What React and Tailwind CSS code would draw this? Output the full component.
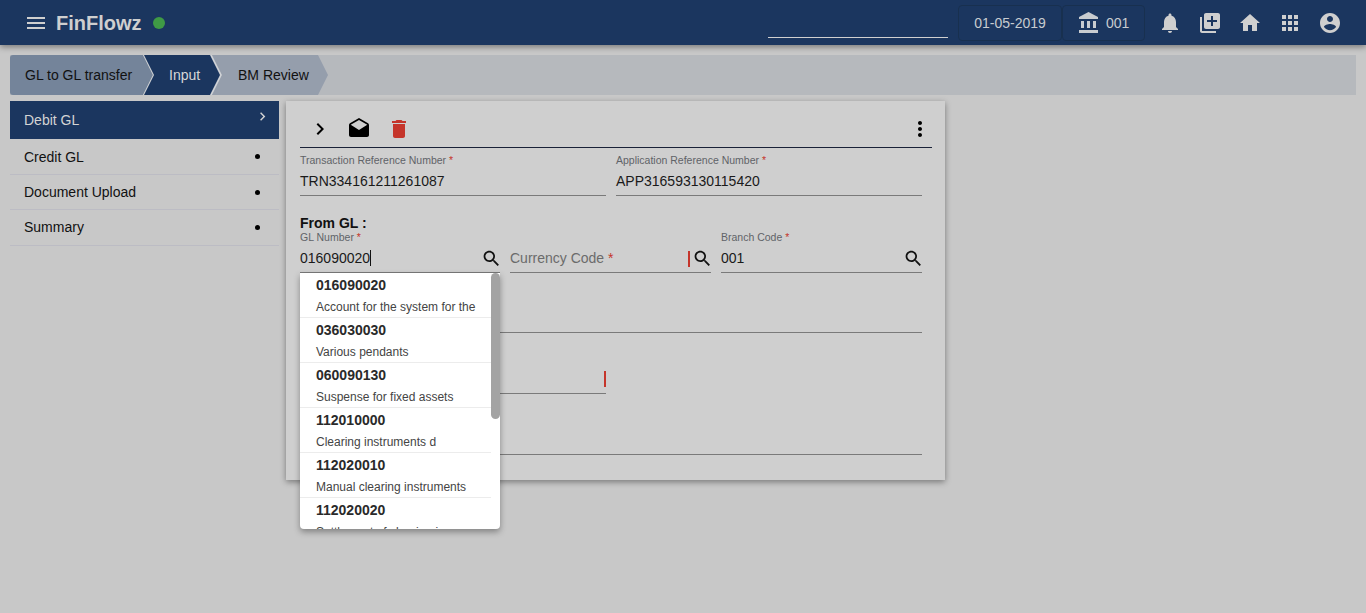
const P = {
  menu: "M3 18h18v-2H3v2zm0-5h18v-2H3v2zm0-7v2h18V6H3z",
  bell: "M12 22c1.1 0 2-.9 2-2h-4c0 1.1.89 2 2 2zm6-6v-5c0-3.07-1.64-5.64-4.5-6.32V4c0-.83-.67-1.5-1.5-1.5s-1.5.67-1.5 1.5v.68C7.63 5.36 6 7.92 6 11v5l-2 2v1h16v-1l-2-2z",
  lib: "M4 6H2v14c0 1.1.9 2 2 2h14v-2H4V6zm16-4H8c-1.1 0-2 .9-2 2v12c0 1.1.9 2 2 2h12c1.1 0 2-.9 2-2V4c0-1.1-.9-2-2-2zm-1 9h-4v4h-2v-4H9V9h4V5h2v4h4v2z",
  home: "M10 20v-6h4v6h5v-8h3L12 3 2 12h3v8z",
  apps: "M4 8h4V4H4v4zm6 12h4v-4h-4v4zm-6 0h4v-4H4v4zm0-6h4v-4H4v4zm6 0h4v-4h-4v4zm6-10v4h4V4h-4zm-6 4h4V4h-4v4zm6 6h4v-4h-4v4zm0 6h4v-4h-4v4z",
  acct: "M12 2C6.48 2 2 6.48 2 12s4.48 10 10 10 10-4.48 10-10S17.52 2 12 2zm0 3c1.66 0 3 1.34 3 3s-1.34 3-3 3-3-1.34-3-3 1.34-3 3-3zm0 14.2c-2.5 0-4.71-1.28-6-3.22.03-1.99 4-3.08 6-3.08 1.99 0 5.97 1.09 6 3.08-1.29 1.94-3.5 3.22-6 3.22z",
  bank: "M4 10v7h3v-7H4zm6 0v7h3v-7h-3zM2 22h19v-3H2v3zm14-12v7h3v-7h-3zm-4.5-9L2 6v2h19V6l-9.5-5z",
  search: "M15.5 14h-.79l-.28-.27C15.41 12.59 16 11.11 16 9.5 16 5.91 13.09 3 9.5 3S3 5.91 3 9.5 5.91 16 9.5 16c1.61 0 3.09-.59 4.23-1.57l.27.28v.79l5 4.99L20.49 19l-4.99-5zm-6 0C7.01 14 5 11.99 5 9.5S7.01 5 9.5 5 14 7.01 14 9.5 11.99 14 9.5 14z",
  drafts: "M21.99 8c0-.72-.37-1.35-.94-1.7L12 1 2.95 6.3C2.38 6.65 2 7.28 2 8v10c0 1.1.9 2 2 2h16c1.1 0 2-.9 2-2l-.01-10zM12 13L3.74 7.84 12 3l8.26 4.84L12 13z",
  del: "M6 19c0 1.1.9 2 2 2h8c1.1 0 2-.9 2-2V7H6v12zM19 4h-3.5l-1-1h-5l-1 1H5v2h14V4z",
  more: "M12 8c1.1 0 2-.9 2-2s-.9-2-2-2-2 .9-2 2 .9 2 2 2zm0 2c-1.1 0-2 .9-2 2s.9 2 2 2 2-.9 2-2-.9-2-2-2zm0 6c-1.1 0-2 .9-2 2s.9 2 2 2 2-.9 2-2-.9-2-2-2z",
  chev: "M10 6L8.59 7.41 13.17 12l-4.58 4.59L10 18l6-6z",
};

function Icon({ d, size = 24, className = "" }) {
  return (
    <svg viewBox="0 0 24 24" width={size} height={size} fill="currentColor" className={"shrink-0 " + className}>
      <path d={d} />
    </svg>
  );
}

const Label = ({ children }) => (
  <div className="h-[14px] text-[10.5px] leading-[14px] text-[#5f6368] whitespace-nowrap">
    {children} <span className="text-[#c5352b]">*</span>
  </div>
);

const Field = ({ label, value, className = "", children }) => (
  <div className={"relative " + className}>
    <Label>{label}</Label>
    <div className="h-[29px] border-b border-[#7a7a7a] flex items-center text-[14px] text-[#1a1a1a] pt-[1px]">
      <span className="flex-1">{value}</span>
      {children}
    </div>
  </div>
);

const Search = ({ className = "" }) => <Icon d={P.search} size={21} className={"text-[#111] " + className} />;

const options = [
  ["016090020", "Account for the system for the"],
  ["036030030", "Various pendants"],
  ["060090130", "Suspense for fixed assets"],
  ["112010000", "Clearing instruments d"],
  ["112020010", "Manual clearing instruments"],
  ["112020020", "Settlement of clearing ins"],
];

export default function App() {
  return (
    <div className="relative h-[613px] w-[1366px] overflow-hidden bg-[#c8c8c8] font-['Liberation_Sans',Arial,sans-serif]">
      <header className="relative z-10 h-[45px] bg-[#1b365f] flex items-center shadow-[0_2px_6px_rgba(0,0,0,0.4)] text-[#cfcfcf]">
        <Icon d={P.menu} size={24} className="ml-[24px]" />
        <span className="ml-[8px] text-[20px] font-bold">FinFlowz</span>
        <span className="ml-[11px] mt-[1px] h-3 w-3 rounded-full bg-[#3f9a45]" />
        <div className="ml-auto self-start mt-[37px] w-[180px] border-b border-[#d0d0d0]" />
        <div className="ml-[10px] self-start mt-[5px] h-[36px] w-[104px] rounded-[4px] border border-[#18304f] flex items-center justify-center text-[14px] text-[#c8ccd0]">01-05-2019</div>
        <div className="self-start mt-[5px] h-[36px] w-[83px] rounded-[4px] border border-[#18304f] flex items-center gap-[5px] pl-[14px] text-[14px] text-[#c8ccd0]">
          <Icon d={P.bank} size={24} />
          <span>001</span>
        </div>
        <div className="ml-[13px] mr-[24px] flex items-center gap-[16px]">
          <Icon d={P.bell} />
          <Icon d={P.lib} />
          <Icon d={P.home} />
          <Icon d={P.apps} />
          <Icon d={P.acct} />
        </div>
      </header>

      <div className="mx-[10px] mt-[10px] h-[40px] bg-[#b6b9bd] flex">
        <div className="relative w-[143px] h-full shrink-0 rounded-l-[3px] bg-[#74849a] [clip-path:polygon(0_0,133px_0,143px_50%,133px_100%,0_100%)] flex items-center pl-[15px] text-[14px] text-[#111]">GL to GL transfer</div>
        <div className="relative ml-[-10px] w-[79px] h-full shrink-0 bg-[#cfd2d6] [clip-path:polygon(0_0,69px_0,79px_50%,69px_100%,0_100%,10px_50%)]" />
        <div className="relative ml-[-78px] w-[76px] h-full shrink-0 bg-[#1b365f] [clip-path:polygon(0_0,66px_0,76px_50%,66px_100%,0_100%,10px_50%)] flex items-center pl-[25px] text-[14px] text-[#d8d8d8]">Input</div>
        <div className="relative ml-[-8px] w-[116px] h-full shrink-0 bg-[#959eac] [clip-path:polygon(0_0,106px_0,116px_50%,106px_100%,0_100%,10px_50%)] flex items-center pl-[26px] text-[14px] text-[#111]">BM Review</div>
      </div>

      <div className="mx-[10px] mt-[6px] flex gap-[7px] items-start">
        <nav className="w-[269px] shrink-0 text-[14px] text-[#111]">
          <div className="h-[38px] bg-[#1b365f] text-[#d4d4d4] flex items-center justify-between pl-[14px] pr-[8px]">
            <span>Debit GL</span>
            <Icon d={P.chev} size={17} className="mt-[-7px]" />
          </div>
          {[["Credit GL", 36, "mt-[1px]"], ["Document Upload", 35, ""], ["Summary", 36, "mt-[-1px]"]].map(([t, h, c]) => (
            <div key={t} style={{ height: h }} className="border-b border-[#bcbcc4] flex items-center justify-between pl-[14px] pr-[19px]">
              <span className={c}>{t}</span>
              <span className="h-[5px] w-[5px] rounded-full bg-black" />
            </div>
          ))}
        </nav>

        <main className="relative w-[659px] h-[379px] shrink-0 bg-[#cfcfcf] shadow-[0_2px_6px_rgba(0,0,0,0.4)] pl-[14px] pr-[13px]">
          <div className="h-[47px] border-b border-[#1a2238] flex items-center text-black pt-[10px]">
            <Icon d={P.chev} size={24} className="ml-[8px]" />
            <Icon d={P.drafts} size={24} className="ml-[15px]" />
            <Icon d={P.del} size={24} className="ml-[16px] text-[#c5352b]" />
            <Icon d={P.more} size={24} className="ml-auto" />
          </div>

          <div className="pr-[10px]">
            <div className="mt-[5px] flex gap-[10px]">
              <Field label="Transaction Reference Number" value="TRN334161211261087" className="flex-1" />
              <Field label="Application Reference Number" value="APP316593130115420" className="flex-1" />
            </div>

            <div className="mt-[19px] h-[16px] text-[14px] leading-[16px] font-bold text-[#111]">From GL :</div>

            <div className="flex gap-[10px] mt-[-1px] relative">
              <Field label="GL Number" value={<>016090020<span className="inline-block w-px h-[16px] bg-[#111] align-[-3px]" /></>} className="w-[200px]">
                <Search className="mr-[-2px]" />
              </Field>
              <div className="w-[201px]">
                <div className="h-[14px]" />
                <div className="h-[29px] border-b border-[#7a7a7a] flex items-center text-[14px] pt-[1px] text-[#6b6b6b]">
                  <span className="flex-1">Currency Code <span className="text-[#c5352b]">*</span></span>
                  <span className="h-[16px] w-[2px] bg-[#c5352b] mr-[2px]" />
                  <Search className="mr-[-2px]" />
                </div>
              </div>
              <Field label="Branch Code" value="001" className="w-[201px]">
                <Search className="mr-[-2px]" />
              </Field>

              <div className="absolute left-0 top-[43px] z-20 w-[200px] h-[256px] overflow-hidden rounded-b-[4px] bg-white shadow-[0_3px_6px_rgba(0,0,0,0.35)]">
                {options.map(([n, d]) => (
                  <div key={n} className="h-[45px] w-[191px] border-b border-[#ececec] pl-[16px] pt-[3px]">
                    <div className="h-[18px] text-[14px] leading-[18px] font-bold text-[#2a2a2a]">{n}</div>
                    <div className="mt-[5px] text-[12px] leading-[16px] text-[#444] whitespace-nowrap">{d}</div>
                  </div>
                ))}
                <div className="absolute right-0 top-0 w-[9px] h-[146px] rounded-[5px] bg-[#a3a3a3]" />
              </div>
            </div>

            <div className="mt-[59px] border-b border-[#7a7a7a]" />
            <div className="mt-[60px] w-[306px] border-b border-[#7a7a7a] relative">
              <span className="absolute right-0 bottom-[6px] h-[16px] w-[2px] bg-[#c5352b]" />
            </div>
            <div className="mt-[60px] border-b border-[#7a7a7a]" />
          </div>
        </main>
      </div>
    </div>
  );
}
